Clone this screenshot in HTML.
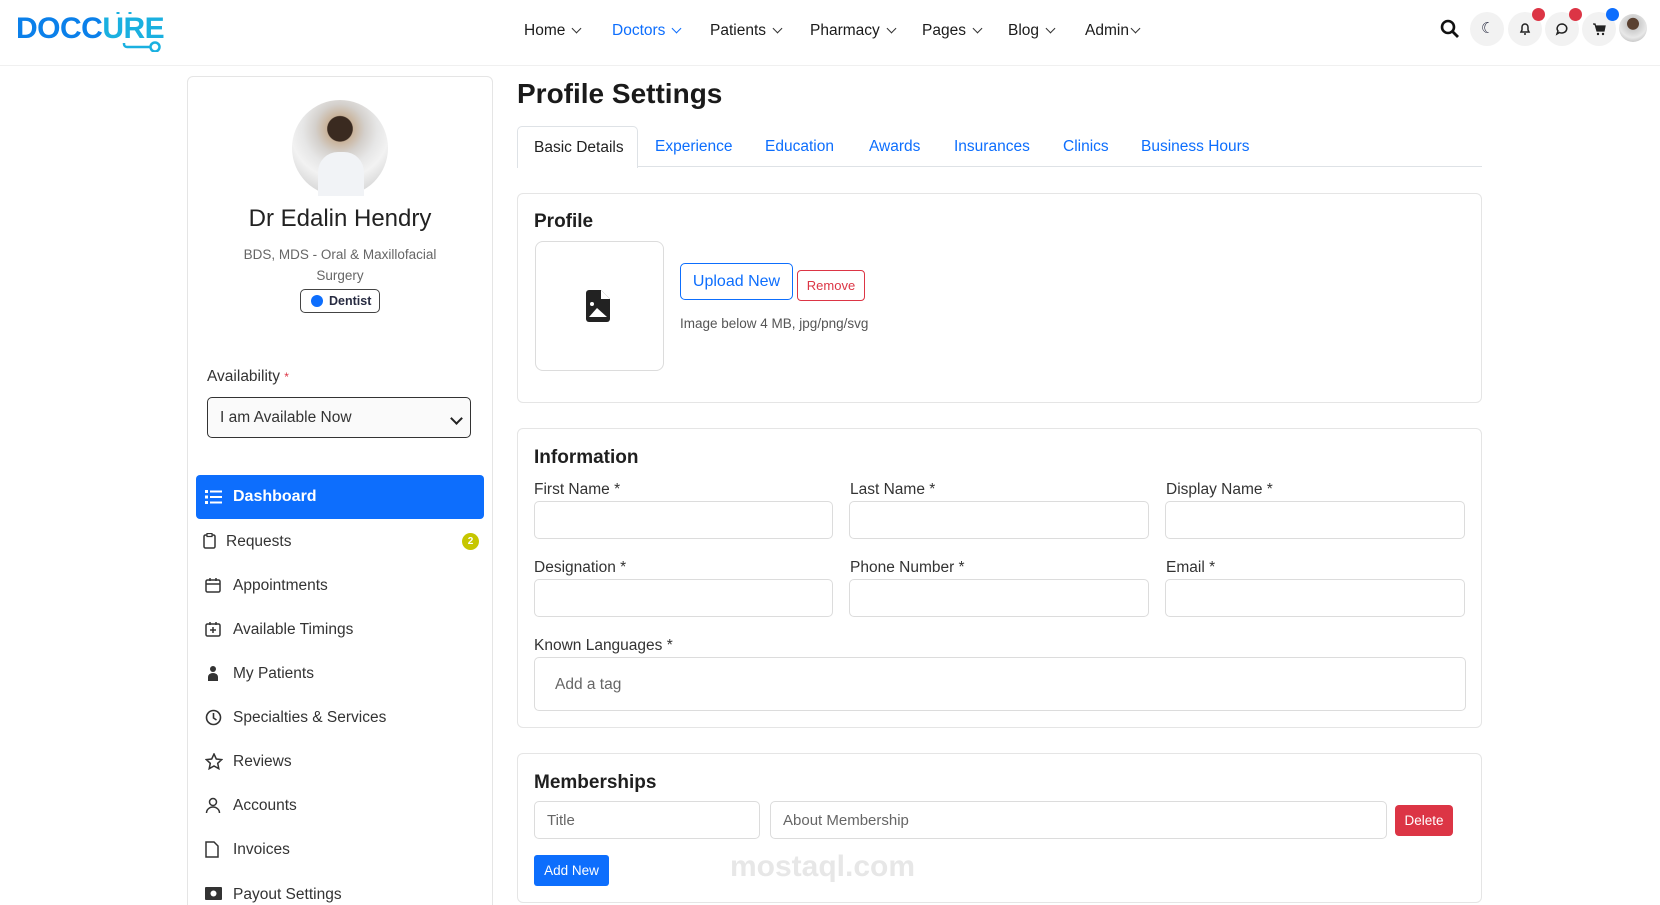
<!DOCTYPE html>
<html><head><meta charset="utf-8"><style>
*{box-sizing:border-box;margin:0;padding:0}
html,body{width:1660px;height:905px;overflow:hidden}
body{background:#fff;font-family:"Liberation Sans",sans-serif;color:#272b41;position:relative}
.a{position:absolute}
.hdr{left:0;top:0;width:1660px;height:66px;border-bottom:1px solid #f0f0f0}
.nav{top:22px;font-size:15.5px;color:#1b1b1b}
.nav span{position:absolute;white-space:nowrap}
.chev{display:inline-block;width:7px;height:7px;border-right:1.6px solid #333;border-bottom:1.6px solid #333;transform:rotate(45deg);margin-left:8px;position:relative;top:-3px}
.circ{width:34px;height:34px;border-radius:50%;background:#f2f2f2;top:12px}
.dot{width:13px;height:13px;border-radius:50%;top:8px}
.card{border:1px solid #e5e5e5;border-radius:6px;background:#fff}
.menu{font-size:15.5px;color:#333}
.menu div{position:absolute;left:233px;white-space:nowrap}
.ic{position:absolute;left:205px}
.inp{border:1px solid #dcdcdc;border-radius:5px;background:#fff}
.lbl{font-size:15.5px;color:#333}
.tab{top:138px;font-size:15.5px;color:#0d6efd}
</style></head><body>
<div class="a hdr"></div>
<div class="a" style="left:16px;top:12px;font-size:30px;font-weight:bold;letter-spacing:-0.5px;color:#0b80ea">DOCC<span style="color:#1ab0e0">URE</span></div>
<svg class="a" style="left:104px;top:10px" width="62" height="42"><path d="M14 2 v2 M26 2 v2" stroke="#1ab0e0" stroke-width="3"/><path d="M20 33 v1 a3 3 0 0 0 3 3 h23" fill="none" stroke="#1ab0e0" stroke-width="2.5"/><circle cx="51" cy="37" r="4.5" fill="#fff" stroke="#1ab0e0" stroke-width="2.5"/></svg>
<div class="a nav"><span style="left:524px">Home<i class="chev"></i></span><span style="left:612px;color:#0d6efd">Doctors<i class="chev" style="border-color:#0d6efd"></i></span><span style="left:710px">Patients<i class="chev"></i></span><span style="left:810px">Pharmacy<i class="chev"></i></span><span style="left:922px">Pages<i class="chev"></i></span><span style="left:1008px">Blog<i class="chev"></i></span><span style="left:1085px">Admin<i class="chev" style="margin-left:3px"></i></span></div>
<svg class="a" style="left:1440px;top:19px" width="20" height="20"><circle cx="8" cy="8" r="6" fill="none" stroke="#111" stroke-width="2.6"/><path d="M12.5 12.5 L18 18" stroke="#111" stroke-width="2.8"/></svg>
<div class="a circ" style="left:1470px"></div><div class="a circ" style="left:1508px"></div><div class="a circ" style="left:1545px"></div><div class="a circ" style="left:1582px"></div>
<div class="a" style="left:1481px;top:19px;font-size:15px">☾</div>
<svg class="a" style="left:1519px;top:22px" width="12" height="13"><path d="M2 10 h8 l-1-2 v-3 a3 3 0 0 0-6 0 v3z M5 12 h2" fill="none" stroke="#222" stroke-width="1.5"/></svg>
<svg class="a" style="left:1555px;top:22px" width="14" height="14"><path d="M7 2 a5 4.5 0 1 1 -2.5 8.5 L2 12 l1-3 A5 4.5 0 0 1 7 2z" fill="none" stroke="#222" stroke-width="1.5"/></svg>
<svg class="a" style="left:1592px;top:22px" width="14" height="14"><path d="M1 2 h2 l2 7 h7 l1-5 H4" fill="#222" stroke="#222" stroke-width="1.3"/><circle cx="6" cy="12" r="1.2" fill="#222"/><circle cx="11" cy="12" r="1.2" fill="#222"/></svg>
<div class="a dot" style="left:1532px;background:#dc3545"></div><div class="a dot" style="left:1569px;background:#dc3545"></div><div class="a dot" style="left:1606px;background:#0d6efd"></div>
<div class="a" style="left:1619px;top:14px;width:28px;height:28px;border-radius:50%;background:radial-gradient(circle at 50% 35%,#5a4030 0 25%,#ccc 27%,#e8e8e8 60%,#aaa)"></div>

<!-- sidebar -->
<div class="a card" style="left:187px;top:76px;width:306px;height:845px"></div>
<div class="a" style="left:292px;top:100px;width:96px;height:96px;border-radius:50%;background:radial-gradient(circle at 50% 30%,#3a2a20 0 15%,#c9b39b 16%,#d4d0cc 30%,#e6e6e6 45%,#f2f2f2 60%,#bfbfbf)"></div>
<div class="a" style="left:318px;top:152px;width:46px;height:44px;background:#f1f3f6;border-radius:20px 20px 0 0"></div>
<div class="a" style="left:188px;top:205px;width:304px;text-align:center;font-size:24px;color:#222">Dr Edalin Hendry</div>
<div class="a" style="left:228px;top:244px;width:224px;text-align:center;font-size:13.5px;color:#666;line-height:21px">BDS, MDS - Oral &amp; Maxillofacial Surgery</div>
<div class="a" style="left:300px;top:289px;width:80px;height:24px;border:1px solid #444;border-radius:5px;font-size:12.5px;font-weight:bold;padding:4px 0 0 28px">Dentist</div>
<div class="a" style="left:311px;top:295px;width:12px;height:12px;border-radius:50%;background:#0d6efd"></div>
<div class="a lbl" style="left:207px;top:368px">Availability <span style="color:#dc3545;font-size:12px">*</span></div>
<div class="a" style="left:207px;top:397px;width:264px;height:41px;border:1px solid #333;border-radius:5px;background:#fafafa;font-size:15.5px;padding:11px 0 0 12px;color:#333">I am Available Now</div>
<i class="a chev" style="left:444px;top:410px;width:9px;height:9px;border-width:2px;border-color:#222"></i>
<div class="a" style="left:196px;top:475px;width:288px;height:44px;border-radius:4px;background:#0d6efd;color:#fff;font-size:16px;font-weight:bold;padding:13px 0 0 37px">Dashboard</div>
<svg class="a" style="left:205px;top:490px" width="17" height="14" fill="#fff"><rect x="0" y="0" width="3" height="3"/><rect x="5" y="0.5" width="12" height="2"/><rect x="0" y="5.5" width="3" height="3"/><rect x="5" y="6" width="12" height="2"/><rect x="0" y="11" width="3" height="3"/><rect x="5" y="11.5" width="12" height="2"/></svg>
<div class="menu">
<div style="top:533px;left:226px">Requests</div>
<div style="top:577px">Appointments</div>
<div style="top:621px">Available Timings</div>
<div style="top:665px">My Patients</div>
<div style="top:709px">Specialties &amp; Services</div>
<div style="top:753px">Reviews</div>
<div style="top:797px">Accounts</div>
<div style="top:841px">Invoices</div>
<div style="top:886px">Payout Settings</div>
</div>
<svg class="ic" style="left:203px;top:533px" width="13" height="16"><rect x="1" y="2" width="11" height="13" rx="1.5" fill="none" stroke="#333" stroke-width="1.5"/><rect x="4" y="0.5" width="5" height="3" fill="#fff" stroke="#333" stroke-width="1.2"/></svg>
<svg class="ic" style="top:577px" width="16" height="16"><rect x="1" y="3" width="14" height="12" rx="1.5" fill="none" stroke="#333" stroke-width="1.5"/><path d="M1 7 h14 M5 1 v3 M11 1 v3" stroke="#333" stroke-width="1.5"/></svg>
<svg class="ic" style="top:621px" width="16" height="16"><rect x="1" y="3" width="14" height="12" rx="1.5" fill="none" stroke="#333" stroke-width="1.5"/><path d="M5 1 v3 M11 1 v3 M8 6 v6 M5 9 h6" stroke="#333" stroke-width="1.5"/></svg>
<svg class="ic" style="top:665px" width="16" height="16" fill="#333"><circle cx="8" cy="4" r="3"/><path d="M3 16 v-4 a5 4 0 0 1 10 0 v4z"/></svg>
<svg class="ic" style="top:709px" width="17" height="17"><circle cx="8.5" cy="8.5" r="7" fill="none" stroke="#333" stroke-width="1.6"/><path d="M8.5 4 v5 l3 2" fill="none" stroke="#333" stroke-width="1.6"/></svg>
<svg class="ic" style="top:753px" width="18" height="17"><path d="M9 1 l2.3 5 5.4.6-4 3.7 1.1 5.4L9 13l-4.8 2.7 1.1-5.4-4-3.7 5.4-.6z" fill="none" stroke="#333" stroke-width="1.5"/></svg>
<svg class="ic" style="top:797px" width="16" height="17"><circle cx="8" cy="5" r="3.5" fill="none" stroke="#333" stroke-width="1.5"/><path d="M1.5 16 a6.5 6 0 0 1 13 0" fill="none" stroke="#333" stroke-width="1.5"/></svg>
<svg class="ic" style="top:841px" width="14" height="17"><path d="M1 1 h8 l4 4 v11 H1z" fill="none" stroke="#333" stroke-width="1.5"/></svg>
<svg class="ic" style="top:887px" width="17" height="13"><rect x="0" y="0" width="17" height="13" rx="1" fill="#333"/><circle cx="8.5" cy="6.5" r="3" fill="#fff"/></svg>
<div class="a" style="left:462px;top:533px;width:17px;height:17px;border-radius:50%;background:#c6c600;color:#fff;font-size:10px;font-weight:bold;text-align:center;line-height:17px">2</div>

<!-- main -->
<div class="a" style="left:517px;top:78px;font-size:28px;font-weight:600;color:#1a1a1a">Profile Settings</div>
<div class="a" style="left:517px;top:166px;width:965px;height:1px;background:#dee2e6"></div>
<div class="a" style="left:517px;top:126px;width:121px;height:42px;border:1px solid #dee2e6;border-bottom:none;border-radius:5px 5px 0 0;background:#fff;font-size:15.5px;padding:12px 0 0 16px;color:#222">Basic Details</div>
<div class="a tab" style="left:655px">Experience</div><div class="a tab" style="left:765px">Education</div><div class="a tab" style="left:869px">Awards</div><div class="a tab" style="left:954px">Insurances</div><div class="a tab" style="left:1063px">Clinics</div><div class="a tab" style="left:1141px">Business Hours</div>

<div class="a card" style="left:517px;top:193px;width:965px;height:210px"></div>
<div class="a" style="left:534px;top:211px;font-size:19px;font-weight:600;color:#1f1f1f">Profile</div>
<div class="a inp" style="left:535px;top:241px;width:129px;height:130px;border-radius:8px"></div>
<svg class="a" style="left:586px;top:290px" width="26" height="32"><path d="M3 0 h12 l9 9 v20 a3 3 0 0 1-3 3 H3 a3 3 0 0 1-3-3 V3 a3 3 0 0 1 3-3z" fill="#222"/><path d="M15 0 v9 h9" fill="#fff"/><circle cx="6" cy="14" r="2" fill="#fff"/><path d="M3 27 l8-9 10 9z" fill="#fff"/></svg>
<div class="a" style="left:680px;top:263px;width:113px;height:37px;border:1px solid #0d6efd;border-radius:5px;color:#0d6efd;font-size:16px;text-align:center;line-height:35px">Upload New</div>
<div class="a" style="left:797px;top:270px;width:68px;height:31px;border:1px solid #dc3545;border-radius:4px;color:#dc3545;font-size:13px;text-align:center;line-height:29px">Remove</div>
<div class="a" style="left:680px;top:316px;font-size:13.5px;color:#555">Image below 4 MB, jpg/png/svg</div>

<div class="a card" style="left:517px;top:428px;width:965px;height:300px"></div>
<div class="a" style="left:534px;top:447px;font-size:19px;font-weight:600;color:#1f1f1f">Information</div>
<div class="a lbl" style="left:534px;top:481px">First Name *</div><div class="a lbl" style="left:850px;top:481px">Last Name *</div><div class="a lbl" style="left:1166px;top:481px">Display Name *</div>
<div class="a inp" style="left:534px;top:501px;width:299px;height:38px"></div><div class="a inp" style="left:849px;top:501px;width:300px;height:38px"></div><div class="a inp" style="left:1165px;top:501px;width:300px;height:38px"></div>
<div class="a lbl" style="left:534px;top:559px">Designation *</div><div class="a lbl" style="left:850px;top:559px">Phone Number *</div><div class="a lbl" style="left:1166px;top:559px">Email *</div>
<div class="a inp" style="left:534px;top:579px;width:299px;height:38px"></div><div class="a inp" style="left:849px;top:579px;width:300px;height:38px"></div><div class="a inp" style="left:1165px;top:579px;width:300px;height:38px"></div>
<div class="a lbl" style="left:534px;top:637px">Known Languages *</div>
<div class="a inp" style="left:534px;top:657px;width:932px;height:54px;font-size:15.5px;color:#666;padding:18px 0 0 20px">Add a tag</div>

<div class="a card" style="left:517px;top:753px;width:965px;height:150px"></div>
<div class="a" style="left:534px;top:772px;font-size:19px;font-weight:600;color:#1f1f1f">Memberships</div>
<div class="a inp" style="left:534px;top:801px;width:226px;height:38px;font-size:15px;color:#666;padding:10px 0 0 12px">Title</div>
<div class="a inp" style="left:770px;top:801px;width:617px;height:38px;font-size:15px;color:#666;padding:10px 0 0 12px">About Membership</div>
<div class="a" style="left:1395px;top:805px;width:58px;height:31px;border-radius:4px;background:#dc3545;color:#fff;font-size:13.5px;text-align:center;line-height:31px">Delete</div>
<div class="a" style="left:534px;top:855px;width:75px;height:31px;border-radius:3px;background:#0d6efd;color:#fff;font-size:13.5px;text-align:center;line-height:31px">Add New</div>
<div class="a" style="left:730px;top:850px;font-size:30px;font-weight:bold;color:rgba(160,160,160,0.25)">mostaql.com</div>
</body></html>
